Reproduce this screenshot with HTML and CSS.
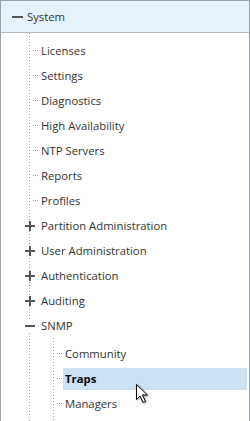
FILE: index.html
```html
<!DOCTYPE html>
<html lang="en">
<head>
    <meta charset="UTF-8">
    <meta name="viewport" content="width=device-width, initial-scale=1.0">
    <title>System Tree</title>
    <link rel="stylesheet" href="styles.css">
</head>
<body>
    <div class="tree">
        <div class="tree-header">
            <span class="toggle minus"></span>
            <span class="header-label">System</span>
        </div>

        <ul class="nodes level1">
            <li class="node"><div class="row"><span class="label">Licenses</span></div></li>
            <li class="node"><div class="row"><span class="label">Settings</span></div></li>
            <li class="node"><div class="row"><span class="label">Diagnostics</span></div></li>
            <li class="node"><div class="row"><span class="label">High Availability</span></div></li>
            <li class="node"><div class="row"><span class="label">NTP Servers</span></div></li>
            <li class="node"><div class="row"><span class="label">Reports</span></div></li>
            <li class="node"><div class="row"><span class="label">Profiles</span></div></li>
            <li class="node parent"><div class="row"><span class="toggle plus"></span><span class="label">Partition Administration</span></div></li>
            <li class="node parent"><div class="row"><span class="toggle plus"></span><span class="label">User Administration</span></div></li>
            <li class="node parent"><div class="row"><span class="toggle plus"></span><span class="label">Authentication</span></div></li>
            <li class="node parent"><div class="row"><span class="toggle plus"></span><span class="label">Auditing</span></div></li>
            <li class="node parent expanded">
                <div class="row"><span class="toggle minus"></span><span class="label">SNMP</span></div>
                <ul class="nodes level2">
                    <li class="node"><div class="row"><span class="label">Community</span></div></li>
                    <li class="node selected"><div class="row"><span class="label">Traps</span></div></li>
                    <li class="node"><div class="row"><span class="label">Managers</span></div></li>
                </ul>
            </li>
        </ul>

        <!-- mouse pointer over the selected item -->
        <svg class="cursor" width="14" height="22" viewBox="0 0 14 22">
            <path d="M1.5 1.5 L1.5 16.5 L5 13 L8 19.5 L10.5 18.5 L7.5 12 L12.5 12 Z" fill="#fff" stroke="#000" stroke-width="1" stroke-linejoin="round"/>
        </svg>
    </div>
</body>
</html>
```

FILE: styles.css
```css
body {
    margin: 0;
    font-family: "Open Sans", "Noto Sans", sans-serif;
    font-size: 11.3px;
    color: #333;
    background-color: #fff;
}

.tree {
    position: relative;
    width: 250px;
    height: 421px;
    box-sizing: border-box;
    border: 1px solid #9aa2a9;
    border-bottom: none;
    overflow: hidden;
}

.tree-header {
    display: flex;
    align-items: center;
    height: 31px;
    padding-left: 11px;
    background-color: #e6f1fa;
    border-bottom: 1px solid #b3bac1;
}

.header-label {
    margin-left: 4px;
    color: #333;
}

.nodes {
    list-style: none;
    margin: 0;
    padding: 0;
}

/* dotted guide lines */
.level1 {
    padding-top: 5px;
    min-height: 390px;
    background-image: linear-gradient(#a3a3a3 1px, transparent 1px);
    background-size: 1px 3px;
    background-repeat: repeat-y;
    background-position: 28px 0;
}

.level2 {
    padding-top: 3px;
    min-height: 80px;
    background-image: linear-gradient(#a3a3a3 1px, transparent 1px);
    background-size: 1px 3px;
    background-repeat: repeat-y;
    background-position: 52px 0;
}

.row {
    position: relative;
    display: flex;
    align-items: center;
    height: 25px;
    padding-left: 38px;
}

.row::before {
    content: "";
    position: absolute;
    left: 32px;
    top: 12px;
    width: 5px;
    height: 1px;
    background-image: linear-gradient(to right, #a3a3a3 1px, transparent 1px);
    background-size: 2px 1px;
}

.level2 .row {
    padding-left: 62px;
}

.level2 .row::before {
    left: 56px;
}

.label {
    padding: 0 2px;
    line-height: 22px;
}

.parent > .row::before {
    display: none;
}

.parent > .row .toggle {
    position: absolute;
    left: 24px;
    top: 8px;
    background-color: #fff;
}

.toggle {
    display: inline-block;
    position: relative;
    width: 10px;
    height: 10px;
}

.toggle::before,
.toggle::after {
    content: "";
    position: absolute;
    background-color: #555;
}

.toggle::before {
    left: 0;
    top: 4px;
    width: 10px;
    height: 2px;
}

.plus::after {
    left: 4px;
    top: 0;
    width: 2px;
    height: 10px;
}

.tree-header .toggle {
    width: 11px;
}

.tree-header .toggle::before {
    width: 11px;
}

.selected .label {
    flex: 1;
    margin-right: 2px;
    background-color: #cce2f2;
    color: #000;
    font-weight: bold;
}

.cursor {
    position: absolute;
    left: 134px;
    top: 382px;
    filter: drop-shadow(1px 1px 1px rgba(0, 0, 0, 0.35));
}
```
